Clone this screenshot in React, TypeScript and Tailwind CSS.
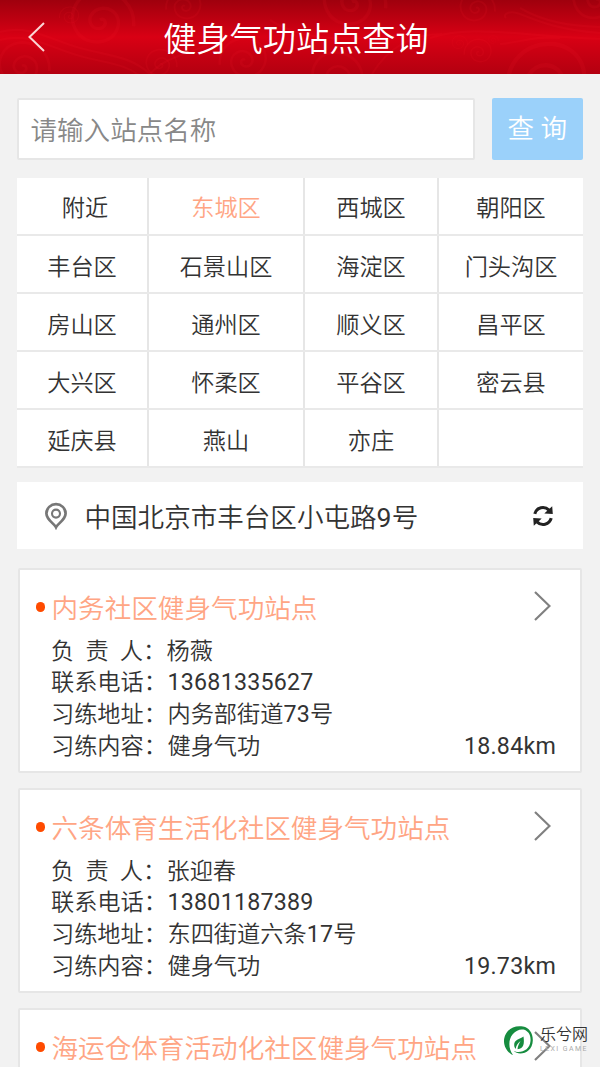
import { clsx } from "clsx";

const districts = [
  ["附近", "东城区", "西城区", "朝阳区"],
  ["丰台区", "石景山区", "海淀区", "门头沟区"],
  ["房山区", "通州区", "顺义区", "昌平区"],
  ["大兴区", "怀柔区", "平谷区", "密云县"],
  ["延庆县", "燕山", "亦庄", ""],
];

type Station = {
  name: string;
  details?: {
    person: string;
    phone: string;
    address: string;
    content: string;
    distance: string;
  };
};

const stations: Station[] = [
  {
    name: "内务社区健身气功站点",
    details: {
      person: "杨薇",
      phone: "13681335627",
      address: "内务部街道73号",
      content: "健身气功",
      distance: "18.84km",
    },
  },
  {
    name: "六条体育生活化社区健身气功站点",
    details: {
      person: "张迎春",
      phone: "13801187389",
      address: "东四街道六条17号",
      content: "健身气功",
      distance: "19.73km",
    },
  },
  { name: "海运仓体育活动化社区健身气功站点" },
];

// cloud curls of the header: centre x, centre y, scale, direction
const curls = [
  [100, 20, 1.6, 1],
  [185, 6, 0.9, -1],
  [22, 66, 1.3, 1],
  [70, 16, 0.5, -1],
  [160, 64, 0.8, 1],
  [245, 60, 1.2, -1],
  [352, 2, 1.6, 1],
  [476, 8, 0.9, 1],
  [479, 52, 0.7, -1],
  [459, 43, 0.4, 1],
  [493, 40, 0.25, 1],
  [335, 76, 1.3, 1],
  [550, 80, 2, -1],
  [596, 0, 1.3, 1],
];

const HeaderPattern = () => (
  <svg
    className="absolute inset-0"
    width="600"
    height="74"
    viewBox="0 0 600 74"
    fill="none"
    stroke="#ff2030"
    strokeOpacity="0.1"
    strokeWidth="2.2"
  >
    {curls.map(([x, y, s, d]) => (
      <path
        key={`${x}-${y}`}
        transform={`translate(${x} ${y}) scale(${s * d} ${s})`}
        d="M0 0c3-2 5 3 1 5c-6 2-10-5-5-10c7-6 18 0 15 10c-3 10-18 12-25 3c-7-10-2-24 12-26c15-1 24 10 23 22"
      />
    ))}
    <path d="M0 32c30-8 50 8 80 16s50 8 70 26M0 40c30-8 50 8 80 16s45 8 60 20M430 38c40-14 90-2 170 1M506 18c-4-4 4-8 14-4c20 8 40 16 80 19M520 8c24 14 50 18 80 19M500 44c24-2 30-8 60-6M150 74c20-22 50-20 75-40M372 74c16-26 40-40 70-40M270 20c30 20 80 24 150 12" />
  </svg>
);

const PinIcon = () => (
  <svg width="24" height="28" viewBox="0 0 24 28" fill="none" stroke="#777">
    <path
      strokeWidth="2.7"
      d="M12 25.200C10.500 22 2.400 17.600 2.400 11.400a9.600 9.200 0 0 1 19.200 0C21.600 17.600 13.500 22 12 25.200Z"
    />
    <circle cx="12" cy="11.600" r="4" strokeWidth="2.100" />
  </svg>
);

const RefreshIcon = () => (
  <svg width="20" height="22" viewBox="0 0 20 22" fill="none">
    <path
      d="M1.800 8.800C3.600 2.200 11.500.6 16 5.200M18.200 13.200C16.400 19.800 8.500 21.400 4 16.800"
      stroke="#222"
      strokeWidth="3.100"
    />
    <path
      d="M19.200 1.200L19.800 9L11.300 8.400ZM.8 20.800L.2 13L8.700 13.600Z"
      fill="#222"
    />
  </svg>
);

const Watermark = () => (
  <div className="absolute top-[1025px] left-[503px] flex">
    <svg width="31" height="31" viewBox="0 0 31 31">
      <path
        fill="#168c3f"
        d="M20 1.500C9-.5 1 7 1 16c0 6.500 4 12 9 14C5.500 24 5 15 9.500 9.500C13 5 17 4 20.500 4.500C25.500 6 28 10 27.500 16c-.5 7-6 11-12 11c-2 0-3.500-.4-4.800-1.200C16 31.500 29.500 28 29.800 15.500C30 8 26 2.500 20 1.500Z"
      />
      <path
        fill="#168c3f"
        d="M20.500 11.500c-4 3-9.500 3-9.300 8.500c0 1.700.5 2.800 1.500 4c.5-3.500 2-5.700 4.800-8c-1.500 2.800-2.800 5-3 8.300c6.500-.6 7-6 6-12.800Z"
      />
    </svg>
    <div className="pl-[6px]">
      <div className="text-[16px] leading-[20px] whitespace-nowrap text-[#333]">
        乐兮网
      </div>
      <div className="text-[7px] leading-[9px] font-normal tracking-[1.400px] whitespace-nowrap text-[#aaa]">
        LEXI GAME
      </div>
    </div>
  </div>
);

// latin characters and digits are a bit heavier than the chinese ones
const MixedText = ({ text }: { text: string }) => (
  <span>
    {text.split(/([\w.]+)/).map((part, i) =>
      i % 2 ? (
        <span key={i} className="font-normal tracking-[0.25px]">
          {part}
        </span>
      ) : (
        part
      ),
    )}
  </span>
);

const Row = ({ label, value }: { label: string; value: string }) => (
  <div className="flex">
    <span className="w-[116.500px]">{label}</span>
    <MixedText text={value} />
  </div>
);

const StationCard = ({ name, details }: Station) => (
  <div className="h-[205px] shrink-0 rounded-xs border-2 border-[#e6e6e6] bg-white">
    <div className="mt-[20.500px] flex h-9 items-center pl-[16px]">
      <span className="mb-[3px] h-[10px] w-[9px] rounded-full bg-[#ff4b00]" />
      <span className="ml-[6.500px] text-[26.600px] leading-9 whitespace-nowrap text-[#ffa584]">
        {name}
      </span>
      <svg
        className="mr-[29px] mb-[5px] ml-auto"
        width="17"
        height="30"
        viewBox="0 0 17 30"
        fill="none"
        stroke="#808080"
        strokeWidth="2.200"
      >
        <path d="M1 1L15.500 15L1 29" />
      </svg>
    </div>
    {details && (
      <div className="mt-[9px] pl-[31px] text-[23.200px] leading-[31.800px] text-[#333]">
        <div className="flex">
          <span className="flex w-[92px] justify-between">
            <span>负</span>
            <span>责</span>
            <span>人</span>
          </span>
          <span className="w-[23.500px]">：</span>
          <span>{details.person}</span>
        </div>
        <Row label="联系电话：" value={details.phone} />
        <Row label="习练地址：" value={details.address} />
        <div className="flex justify-between pr-[24px]">
          <Row label="习练内容：" value={details.content} />
          <MixedText text={details.distance} />
        </div>
      </div>
    )}
  </div>
);

const App = () => {
  return (
    <div className="relative h-[1067px] w-[600px] overflow-hidden bg-[#f2f2f2] font-['Roboto','Noto_Sans_CJK_SC',sans-serif] font-[350]">
      <header className="relative flex h-[74px] items-center justify-center bg-linear-to-b from-[#9f000d] via-[#d90014] to-[#b30010]">
        <HeaderPattern />
        <svg
          className="absolute top-[22px] left-[28px]"
          width="18"
          height="30"
          viewBox="0 0 18 30"
          fill="none"
          stroke="#fbd5d5"
          strokeWidth="2"
        >
          <path d="M16 1L1.500 15L16 29" />
        </svg>
        <h1 className="relative mt-[6px] ml-[-8px] text-[33.200px] leading-10 text-white">
          健身气功站点查询
        </h1>
      </header>

      <div className="mt-[24px] flex h-[62px] gap-[17px] px-[17px]">
        <div className="flex w-[458px] items-center rounded-xs border-2 border-[#e6e6e6] bg-white pt-1 pl-[11.500px] text-[26.560px] text-[#888]">
          请输入站点名称
        </div>
        <button className="h-[61.500px] w-[91.500px] rounded-xs bg-[#9bd1fa] pt-px text-[26.560px] whitespace-pre text-white">
          查 询
        </button>
      </div>

      <div className="mx-[17px] mt-[17.500px] h-[291px] w-[566px] text-[23.200px] text-[#333]">
        {districts.map((row, i) => (
          <div
            key={i}
            className="grid h-[58.200px] grid-cols-[132px_156px_134px_144px] border-b-2 border-[#e9e9e9] bg-white"
          >
            {row.map((name, j) => (
              <div
                key={j}
                className={clsx(
                  "flex items-center justify-center pt-[6.500px]",
                  j < 3 && "border-r-2 border-[#e6e6e6]",
                  name === "东城区" && "text-[#ffa584]",
                  name === "附近" && "pl-[6px]",
                )}
              >
                {name}
              </div>
            ))}
          </div>
        ))}
      </div>

      <div className="mx-[17px] mt-[13.500px] flex h-[67px] items-center bg-white pr-[30px] pl-[27px]">
        <PinIcon />
        <span className="mt-1 ml-[16.500px] text-[26.560px] text-[#333]">
          <MixedText text="中国北京市丰台区小屯路9号" />
        </span>
        <span className="ml-auto">
          <RefreshIcon />
        </span>
      </div>

      <div className="mx-[18px] mt-[19px] flex w-[564px] flex-col gap-[15px]">
        {stations.map((item) => (
          <StationCard key={item.name} {...item} />
        ))}
      </div>
      <Watermark />
    </div>
  );
};

export default App;
